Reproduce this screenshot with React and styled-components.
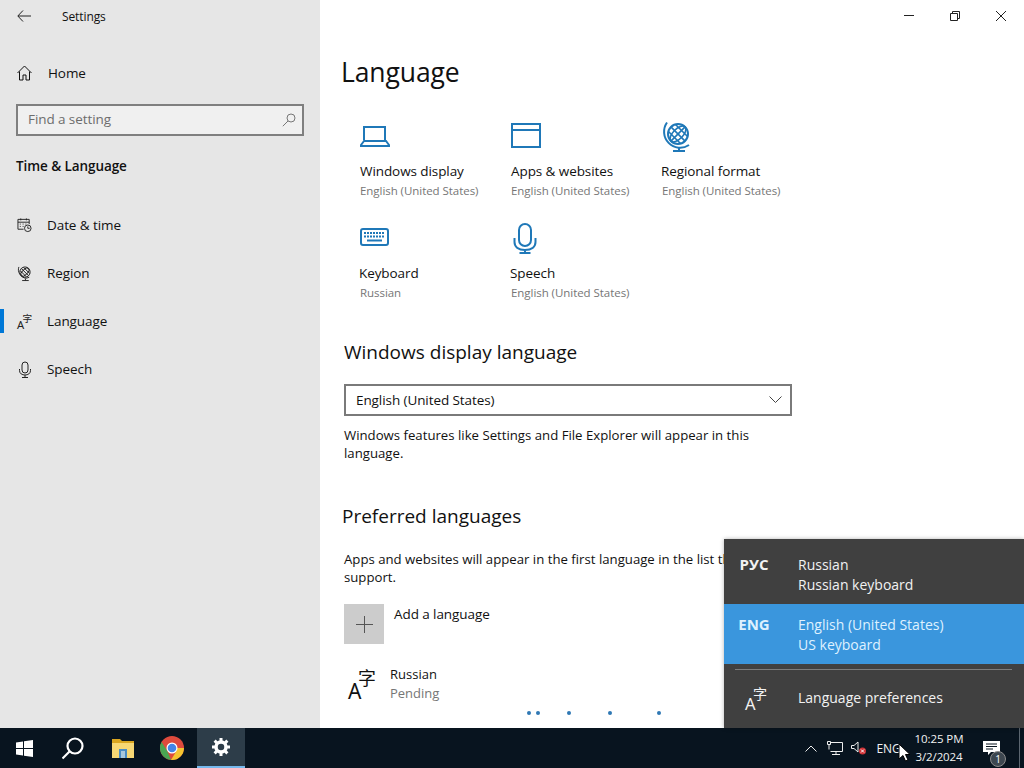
import React from 'react';
import styled, { createGlobalStyle } from 'styled-components';

const GlobalStyle = createGlobalStyle`
    html, body { margin: 0; padding: 0; }
    body {
        font-family: "Open Sans", "Noto Sans", "Noto Sans CJK SC", sans-serif;
        font-size: 13.5px;
        letter-spacing: -0.08px;
        color: #111;
    }
    * { box-sizing: border-box; }
`;

const Screen = styled.div`
    position: relative;
    width: 1024px;
    height: 768px;
    overflow: hidden;
    display: grid;
    grid-template-rows: 728px 40px;
`;

const Window = styled.div`
    display: grid;
    grid-template-columns: 320px 1fr;
    overflow: hidden;
    background: #fff;
`;

/* sidebar */
const Sidebar = styled.aside`
    background: #e6e6e6;
    display: flex;
    flex-direction: column;
`;

const SideHeader = styled.div`
    height: 32px;
    display: flex;
    align-items: center;
    padding-left: 17px;
    font-size: 12px;
    letter-spacing: -0.1px;
    svg { margin-right: 31px; }
`;

const HomeRow = styled.div`
    height: 48px;
    margin-top: 17px;
    display: flex;
    align-items: center;
    padding-left: 17px;
    gap: 16px;
`;

const SearchBox = styled.div`
    height: 32px;
    margin: 7px 16px 0;
    border: 2px solid #7f7f7f;
    background: #f0f0f0;
    color: #6d6d6d;
    padding: 0 6px 2px 10px;
    display: flex;
    align-items: center;
    justify-content: space-between;
    svg { margin-top: 1px; }
`;

const SectionTitle = styled.div`
    margin: 20px 0 25px 16px;
    height: 20px;
    line-height: 20px;
    font-weight: 600;
`;

const NavRow = styled.div`
    position: relative;
    height: 48px;
    display: flex;
    align-items: center;
    padding-left: 17px;
    gap: 15px;
    ${p => p.$active && `
        &::before {
            content: '';
            position: absolute;
            left: 0;
            top: 12px;
            width: 4px;
            height: 24px;
            background: #0078d7;
        }
    `}
`;

const NavIcon = styled.span`
    width: 15px;
    height: 20px;
    display: flex;
    align-items: center;
    justify-content: center;
    flex: none;
`;

/* main pane */
const Main = styled.main`
    display: flex;
    flex-direction: column;
    padding-left: 24px;
`;

const Controls = styled.div`
    height: 32px;
    display: flex;
    justify-content: flex-end;
`;

const ControlButton = styled.div`
    width: 46px;
    display: flex;
    align-items: center;
    justify-content: center;
`;

const PageTitle = styled.h1`
    margin: 20px 0 0 -3px;
    height: 40px;
    line-height: 40px;
    font-size: 26.5px;
    font-weight: 400;
    letter-spacing: -0.1px;
`;

const TileGrid = styled.div`
    margin: 28px 0 0 16px;
    display: grid;
    grid-template-columns: repeat(3, 151px);
    grid-auto-rows: 102px;
`;

const Tile = styled.div`
    display: flex;
    flex-direction: column;
`;

const TileIcon = styled.div`
    height: 30px;
    margin-bottom: 11px;
    color: #1f78b8;
`;

const TileName = styled.div`
    line-height: 20px;
    height: 20px;
    margin-left: ${p => p.$nudge || 0}px;
    white-space: nowrap;
`;

const TileSub = styled.div`
    line-height: 20px;
    height: 20px;
    font-size: 11.5px;
    letter-spacing: -0.05px;
    color: #767676;
    white-space: nowrap;
`;

const Heading = styled.h2`
    margin: ${p => p.$top}px 0 0 ${p => p.$left || 0}px;
    height: 28px;
    line-height: 28px;
    font-size: 19px;
    font-weight: 400;
    letter-spacing: 0;
    white-space: nowrap;
`;

const Select = styled.div`
    margin-top: 18px;
    width: 448px;
    height: 32px;
    border: 2px solid #7a7a7a;
    padding: 0 8px 0 10px;
    display: flex;
    align-items: center;
    justify-content: space-between;
`;

const Paragraph = styled.p`
    margin: ${p => p.$top}px 0 0;
    width: 450px;
    font-size: 13.2px;
    letter-spacing: 0;
    line-height: 18px;
`;

const AddRow = styled.div`
    margin-top: 18px;
    height: 40px;
    display: flex;
    gap: 10px;
`;

const AddSquare = styled.div`
    width: 40px;
    height: 40px;
    background: #cccccc;
    display: flex;
    align-items: center;
    justify-content: center;
`;

const AddLabel = styled.div`
    line-height: 20px;
`;

const LanguageRow = styled.div`
    margin-top: 21px;
    height: 40px;
    display: flex;
    gap: 14px;
    padding-left: 4px;
`;

const LanguageIcon = styled.div`
    margin-top: 5px;
`;

const LanguageText = styled.div`
    line-height: 19px;
    font-size: 13px;
    letter-spacing: 0;
`;

const Muted = styled.div`
    color: #767676;
`;

const Dots = styled.div`
    margin: 6px 0 0 183px;
    display: flex;
`;

const Dot = styled.i`
    width: 4px;
    height: 4px;
    border-radius: 50%;
    background: #2f78b4;
    margin-right: ${p => p.$gap}px;
`;

const Glyph = styled.span`
    display: inline-block;
    position: relative;
    width: ${p => p.$size}px;
    height: ${p => p.$size}px;
    color: ${p => p.$color};
    font-family: "Noto Sans", "Noto Sans CJK SC", sans-serif;
    letter-spacing: 0;
    line-height: 1;
    b {
        position: absolute;
        left: 0;
        bottom: ${p => p.$size * -0.14}px;
        font-weight: 400;
        font-size: ${p => p.$size * 0.75}px;
    }
    u {
        position: absolute;
        right: 0;
        top: 0;
        text-decoration: none;
        font-size: ${p => p.$size * 0.64}px;
    }
`;

/* language flyout */
const Flyout = styled.div`
    position: absolute;
    right: 0;
    bottom: 40px;
    width: 300px;
    height: 189px;
    background: #404040;
    color: #f2f2f2;
    font-size: 14px;
    letter-spacing: 0;
    box-shadow: 0 0 4px rgba(0, 0, 0, 0.3);
`;

const FlyRow = styled.div`
    height: ${p => p.$height}px;
    padding-top: ${p => p.$top}px;
    display: flex;
    background: ${p => (p.$selected ? '#3a96dd' : 'transparent')};
    color: ${p => (p.$selected ? '#dff1ff' : '#f2f2f2')};
`;

const FlyCode = styled.div`
    width: 74px;
    margin-top: -1px;
    padding-right: 14px;
    text-align: center;
    font-size: 15px;
    font-weight: 700;
    line-height: 20px;
`;

const FlyText = styled.div`
    line-height: 20px;
`;

const FlySeparator = styled.div`
    height: 1px;
    margin: 5px 12px 0 11px;
    background: #7d7d7d;
`;

const FlyFooter = styled.div`
    height: 54px;
    display: flex;
    align-items: center;
`;

const FlyFooterIcon = styled.div`
    width: 74px;
    padding: 6px 0 0 21px;
`;

/* taskbar */
const Taskbar = styled.footer`
    background: #08141f;
    color: #f2f2f2;
    display: flex;
    justify-content: space-between;
`;

const TaskGroup = styled.div`
    display: flex;
    gap: 1px;
`;

const TaskButton = styled.div`
    width: 48px;
    height: 40px;
    margin-left: ${p => p.$left || 0}px;
    display: flex;
    align-items: center;
    justify-content: center;
    ${p => p.$active && `
        background: #2d3d49;
        border-bottom: 2px solid #76b9ed;
    `}
`;

const Tray = styled.div`
    display: flex;
    align-items: center;
`;

const TrayIcon = styled.div`
    width: ${p => p.$width}px;
    display: flex;
    justify-content: center;
`;

const TrayLang = styled.div`
    width: 43px;
    font-size: 12px;
    text-align: center;
`;

const Clock = styled.div`
    width: 58px;
    font-size: 11.5px;
    letter-spacing: -0.1px;
    line-height: 18px;
    text-align: center;
    white-space: nowrap;
`;

const Notify = styled.div`
    position: relative;
    width: 51px;
    display: flex;
    justify-content: center;
    svg { margin-right: 5px; }
`;

const NotifyBadge = styled.span`
    position: absolute;
    left: 22px;
    top: 10px;
    width: 16px;
    height: 16px;
    border-radius: 50%;
    background: #3d4750;
    border: 1px solid #8c8c8c;
    font-size: 10px;
    line-height: 14px;
    text-align: center;
    color: #fff;
`;

const ShowDesktop = styled.div`
    width: 5px;
    height: 40px;
    border-left: 1px solid #5c6670;
`;

const Cursor = styled.svg`
    position: absolute;
    left: 898px;
    top: 743px;
`;

const tiles = [
    { name: 'Windows display', sub: 'English (United States)', icon: 'laptop' },
    { name: 'Apps & websites', sub: 'English (United States)', icon: 'app' },
    { name: 'Regional format', sub: 'English (United States)', icon: 'globe', nudge: -1 },
    { name: 'Keyboard', sub: 'Russian', icon: 'keyboard', nudge: -1 },
    { name: 'Speech', sub: 'English (United States)', icon: 'mic', nudge: -1 },
];

const Stroke = ({ w, h, sw = 1, children, color = 'currentColor' }) => (
    <svg width={w} height={h} viewBox={`0 0 ${w} ${h}`} fill="none" stroke={color} strokeWidth={sw}>
        {children}
    </svg>
);

const TileGraphic = ({ kind }) => {
    if (kind === 'laptop')
        return (
            <Stroke w={30} h={30} sw={2}>
                <path d="M4 20V7h21v13" />
                <path d="M4 21 1 25v1h28v-1l-3-4z" />
            </Stroke>
        );
    if (kind === 'app')
        return (
            <Stroke w={30} h={30} sw={2}>
                <rect x="1" y="4" width="28" height="23" />
                <path d="M1 10h28" />
            </Stroke>
        );
    if (kind === 'globe')
        return (
            <Stroke w={30} h={32} sw={2}>
                <circle cx="16" cy="14" r="10" />
                <g transform="rotate(45 16 14)" strokeWidth="1.600">
                    <ellipse cx="16" cy="14" rx="5" ry="10" />
                    <path d="M16 4v20M6 14h20M7.500 9h17M7.500 19h17" />
                </g>
                <path d="M5 2.500 A16 16 0 0 0 27 25M17 28v3M11 31h12" />
            </Stroke>
        );
    if (kind === 'keyboard')
        return (
            <Stroke w={30} h={30} sw={2}>
                <rect x="1" y="7" width="27" height="16" rx="2" />
                <path d="M4 11h21M4 14.500h21" strokeDasharray="2 1" />
                <path d="M7 18.500h15" />
            </Stroke>
        );
    return (
        <Stroke w={30} h={32} sw={2}>
            <rect x="8" y="2" width="12" height="22" rx="6" />
            <path d="M3.500 16v4c0 5 4 8 10.500 8s10.500-3 10.500-8v-4M14 28v3M8.500 31h11" />
        </Stroke>
    );
};

const HomeIcon = () => (
    <Stroke w={15} h={16} color="#111">
        <path d="M.5 8 7.500 1 14.500 8M2.500 6.500V15h3.500v-5h3v5h3.500V6.500" />
    </Stroke>
);

const SmallGlobe = () => (
    <Stroke w={16} h={17} color="#222">
        <circle cx="8.500" cy="7" r="5.500" />
        <g transform="rotate(45 8.500 7)">
            <ellipse cx="8.500" cy="7" rx="2.800" ry="5.500" />
            <path d="M3 7h11M4 4.500h9M4 9.500h9" />
        </g>
        <path d="M2 1.500c-2 5 2 12 8 12l3-1M9 14v2M5.500 16h7" />
    </Stroke>
);

const SmallCalendar = () => (
    <Stroke w={16} h={16} color="#222">
        <path d="M7 12.500H1V2h12v5M1 5h12M4 1v2M10 1v2M3 7h1M6 7h1M9 7h1M3 9.500h1M6 9.500h1" />
        <circle cx="11.500" cy="11.500" r="3.500" />
        <path d="M11.500 9.500v2h2" />
    </Stroke>
);

const SmallMic = () => (
    <Stroke w={14} h={17} color="#222">
        <rect x="4" y="1" width="6" height="11" rx="3" />
        <path d="M1.500 8v1.500c0 3 2.500 4.500 5.500 4.500s5.500-1.500 5.500-4.500V8M7 14v2M4 16.500h6" />
    </Stroke>
);

const LangGlyph = ({ size, color }) => (
    <Glyph $size={size} $color={color}>
        <b>A</b>
        <u>字</u>
    </Glyph>
);

const WinLogo = () => (
    <svg width="17" height="17" viewBox="0 0 17 17" fill="#fff">
        <path d="M0 2.400 7 1.400V8H0zM8 1.300 17 0V8H8zM0 9h7v6.600l-7-1zM8 9h9v8l-9-1.300z" />
    </svg>
);

const SearchIcon = () => (
    <Stroke w={23} h={23} sw={2.200} color="#fff">
        <circle cx="13" cy="9" r="7.500" />
        <path d="M7.500 14.500.5 21.500" />
    </Stroke>
);

const FolderIcon = () => (
    <svg width="22" height="20" viewBox="0 0 22 20">
        <path d="M0 1h8l2 2h12v3H0z" fill="#d9a520" />
        <rect y="5" width="22" height="15" fill="#f7d774" />
        <rect x="7" y="11" width="8" height="9" fill="#4a8cc4" />
        <rect x="9" y="13" width="4" height="7" fill="#a9c8dc" />
    </svg>
);

const ChromeIcon = () => (
    <svg width="24" height="24" viewBox="0 0 24 24">
        <circle cx="12" cy="12" r="12" fill="#dd4a3d" />
        <path d="M12 12h12a12 12 0 0 1-12 12l-1-.05L17 14z" fill="#f4c430" />
        <path d="M1.600 6 7 14.500l4 9.500A12 12 0 0 1 1.600 6z" fill="#4aa552" />
        <circle cx="12" cy="12" r="5.500" fill="#fff" />
        <circle cx="12" cy="12" r="4.300" fill="#4285e8" />
    </svg>
);

const GearIcon = () => (
    <svg width="18" height="18" viewBox="0 0 18 18">
        <circle cx="9" cy="9" r="5" fill="none" stroke="#fff" strokeWidth="3.500" />
        <path
            d="M9 0v4M9 14v4M0 9h4M14 9h4M2.600 2.600l2.900 2.900M12.500 12.500l2.900 2.900M15.400 2.600l-2.900 2.900M5.500 12.500l-2.900 2.900"
            stroke="#fff"
            strokeWidth="3"
        />
    </svg>
);

const App = () => (
    <Screen>
        <GlobalStyle />
        <Window>
            <Sidebar>
                <SideHeader>
                    <Stroke w={14} h={12} color="#222">
                        <path d="M6 .5.800 6 6 11.500M1 6h13" />
                    </Stroke>
                    Settings
                </SideHeader>
                <HomeRow>
                    <HomeIcon />
                    Home
                </HomeRow>
                <SearchBox>
                    Find a setting
                    <Stroke w={14} h={14} color="#777">
                        <circle cx="9" cy="5" r="4" />
                        <path d="M6 8 .8 13.200" />
                    </Stroke>
                </SearchBox>
                <SectionTitle>Time &amp; Language</SectionTitle>
                <NavRow>
                    <NavIcon><SmallCalendar /></NavIcon>
                    Date &amp; time
                </NavRow>
                <NavRow>
                    <NavIcon><SmallGlobe /></NavIcon>
                    Region
                </NavRow>
                <NavRow $active>
                    <NavIcon><LangGlyph size={15} color="#222" /></NavIcon>
                    Language
                </NavRow>
                <NavRow>
                    <NavIcon><SmallMic /></NavIcon>
                    Speech
                </NavRow>
            </Sidebar>
            <Main>
                <Controls>
                    <ControlButton>
                        <Stroke w={10} h={10} color="#222"><path d="M0 4.500h10" /></Stroke>
                    </ControlButton>
                    <ControlButton>
                        <Stroke w={10} h={10} color="#222">
                            <path d="M.5 2.500h7v7h-7zM2.500 2.500v-2h7v7h-2" />
                        </Stroke>
                    </ControlButton>
                    <ControlButton>
                        <Stroke w={10} h={10} color="#222"><path d="M0 0l10 10M10 0 0 10" /></Stroke>
                    </ControlButton>
                </Controls>
                <PageTitle>Language</PageTitle>
                <TileGrid>
                    {tiles.map(t => (
                        <Tile key={t.name}>
                            <TileIcon><TileGraphic kind={t.icon} /></TileIcon>
                            <TileName $nudge={t.nudge}>{t.name}</TileName>
                            <TileSub>{t.sub}</TileSub>
                        </Tile>
                    ))}
                </TileGrid>
                <Heading $top={14}>Windows display language</Heading>
                <Select>
                    English (United States)
                    <Stroke w={13} h={8} color="#444"><path d="M.5.500 6.500 6.500 12.500.500" /></Stroke>
                </Select>
                <Paragraph $top={10}>
                    Windows features like Settings and File Explorer will appear in this language.
                </Paragraph>
                <Heading $top={40} $left={-2}>Preferred languages</Heading>
                <Paragraph $top={20}>
                    Apps and websites will appear in the first language in the list that they
                    support.
                </Paragraph>
                <AddRow>
                    <AddSquare>
                        <Stroke w={17} h={17} color="#555"><path d="M8.500 0v17M0 8.500h17" /></Stroke>
                    </AddSquare>
                    <AddLabel>Add a language</AddLabel>
                </AddRow>
                <LanguageRow>
                    <LanguageIcon><LangGlyph size={28} color="#111" /></LanguageIcon>
                    <LanguageText>
                        Russian
                        <Muted>Pending</Muted>
                    </LanguageText>
                </LanguageRow>
                <Dots>
                    <Dot $gap={5} />
                    <Dot $gap={27} />
                    <Dot $gap={37} />
                    <Dot $gap={45} />
                    <Dot $gap={0} />
                </Dots>
            </Main>
        </Window>
        <Taskbar>
            <TaskGroup>
                <TaskButton><WinLogo /></TaskButton>
                <TaskButton><SearchIcon /></TaskButton>
                <TaskButton $left={1}><FolderIcon /></TaskButton>
                <TaskButton><ChromeIcon /></TaskButton>
                <TaskButton $active><GearIcon /></TaskButton>
            </TaskGroup>
            <Tray>
                <TrayIcon $width={18}>
                    <Stroke w={12} h={7} color="#eee"><path d="M.5 6.500 6 1l5.500 5.500" /></Stroke>
                </TrayIcon>
                <TrayIcon $width={30}>
                    <Stroke w={16} h={14} color="#eee">
                        <path d="M3.500 1.500h12v9h-12M9 10.500v3M5 13.500h8M.5.500h3v3h-3zM2 3.500v5" />
                    </Stroke>
                </TrayIcon>
                <TrayIcon $width={17}>
                    <svg width="16" height="14" viewBox="0 0 16 14" fill="none">
                        <path d="M.5 4.500h2.500L7 1v10L3 7.500H.5z" stroke="#eee" />
                        <circle cx="11.500" cy="10" r="3.500" fill="#d13438" />
                        <path d="M10 8.500l3 3M13 8.500l-3 3" stroke="#fff" />
                    </svg>
                </TrayIcon>
                <TrayLang>ENG</TrayLang>
                <Clock>
                    10:25 PM
                    <br />
                    3/2/2024
                </Clock>
                <Notify>
                    <svg width="17" height="15" viewBox="0 0 17 15" fill="#fff">
                        <path d="M0 0h17v11H8l-3 3v-3H0z" />
                        <path d="M3 3h11M3 5.500h11M3 8h7" stroke="#08141f" />
                    </svg>
                    <NotifyBadge>1</NotifyBadge>
                </Notify>
                <ShowDesktop />
            </Tray>
        </Taskbar>
        <Flyout>
            <FlyRow $height={65} $top={16}>
                <FlyCode>РУС</FlyCode>
                <FlyText>Russian<br />Russian keyboard</FlyText>
            </FlyRow>
            <FlyRow $height={60} $top={11} $selected>
                <FlyCode>ENG</FlyCode>
                <FlyText>English (United States)<br />US keyboard</FlyText>
            </FlyRow>
            <FlySeparator />
            <FlyFooter>
                <FlyFooterIcon><LangGlyph size={22} color="#f2f2f2" /></FlyFooterIcon>
                Language preferences
            </FlyFooter>
        </Flyout>
        <Cursor width="13" height="19" viewBox="0 0 13 19">
            <path d="M1 1v15l4-3.500 2.500 5.500 2.500-1-2.500-5.500H12z" fill="#fff" stroke="#000" strokeWidth="1" />
        </Cursor>
    </Screen>
);

export default App;
